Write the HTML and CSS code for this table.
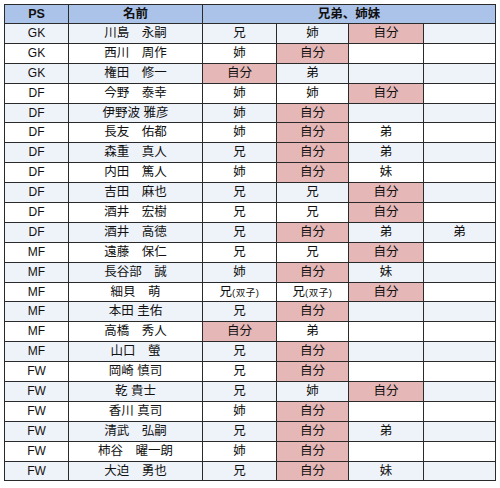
FILE: index.html
```html
<!DOCTYPE html>
<html lang="ja">
<head>
<meta charset="utf-8">
<title>兄弟、姉妹</title>
<link rel="stylesheet" href="styles.css">
</head>
<body>
<table class="sheet">
  <colgroup>
    <col class="c-ps"><col class="c-name"><col class="c-s1"><col class="c-s2"><col class="c-s3"><col class="c-s4">
  </colgroup>
  <thead>
    <tr><th>PS</th><th>名前</th><th colspan="4">兄弟、姉妹</th></tr>
  </thead>
  <tbody>
    <tr><td class="ps">GK</td><td>川島　永嗣</td><td>兄</td><td>姉</td><td class="me">自分</td><td></td></tr>
    <tr><td class="ps">GK</td><td>西川　周作</td><td>姉</td><td class="me">自分</td><td></td><td></td></tr>
    <tr><td class="ps">GK</td><td>権田　修一</td><td class="me">自分</td><td>弟</td><td></td><td></td></tr>
    <tr><td class="ps">DF</td><td>今野　泰幸</td><td>姉</td><td>姉</td><td class="me">自分</td><td></td></tr>
    <tr><td class="ps">DF</td><td>伊野波 雅彦</td><td>姉</td><td class="me">自分</td><td></td><td></td></tr>
    <tr><td class="ps">DF</td><td>長友　佑都</td><td>姉</td><td class="me">自分</td><td>弟</td><td></td></tr>
    <tr><td class="ps">DF</td><td>森重　真人</td><td>兄</td><td class="me">自分</td><td>弟</td><td></td></tr>
    <tr><td class="ps">DF</td><td>内田　篤人</td><td>姉</td><td class="me">自分</td><td>妹</td><td></td></tr>
    <tr><td class="ps">DF</td><td>吉田　麻也</td><td>兄</td><td>兄</td><td class="me">自分</td><td></td></tr>
    <tr><td class="ps">DF</td><td>酒井　宏樹</td><td>兄</td><td>兄</td><td class="me">自分</td><td></td></tr>
    <tr><td class="ps">DF</td><td>酒井　高徳</td><td>兄</td><td class="me">自分</td><td>弟</td><td>弟</td></tr>
    <tr><td class="ps">MF</td><td>遠藤　保仁</td><td>兄</td><td>兄</td><td class="me">自分</td><td></td></tr>
    <tr><td class="ps">MF</td><td>長谷部　誠</td><td>姉</td><td class="me">自分</td><td>妹</td><td></td></tr>
    <tr><td class="ps">MF</td><td>細貝　萌</td><td>兄<span class="note">(双子)</span></td><td>兄<span class="note">(双子)</span></td><td class="me">自分</td><td></td></tr>
    <tr><td class="ps">MF</td><td>本田 圭佑</td><td>兄</td><td class="me">自分</td><td></td><td></td></tr>
    <tr><td class="ps">MF</td><td>高橋　秀人</td><td class="me">自分</td><td>弟</td><td></td><td></td></tr>
    <tr><td class="ps">MF</td><td>山口　螢</td><td>兄</td><td class="me">自分</td><td></td><td></td></tr>
    <tr><td class="ps">FW</td><td>岡崎 慎司</td><td>兄</td><td class="me">自分</td><td></td><td></td></tr>
    <tr><td class="ps">FW</td><td>乾 貴士</td><td>兄</td><td>姉</td><td class="me">自分</td><td></td></tr>
    <tr><td class="ps">FW</td><td>香川 真司</td><td>姉</td><td class="me">自分</td><td></td><td></td></tr>
    <tr><td class="ps">FW</td><td>清武　弘嗣</td><td>兄</td><td class="me">自分</td><td>弟</td><td></td></tr>
    <tr><td class="ps">FW</td><td>柿谷　曜一朗</td><td>姉</td><td class="me">自分</td><td></td><td></td></tr>
    <tr><td class="ps">FW</td><td>大迫　勇也</td><td>兄</td><td class="me">自分</td><td>妹</td><td></td></tr>
  </tbody>
</table>
</body>
</html>
```

FILE: styles.css
```css
html, body {
  margin: 0;
  padding: 0;
  background: #ffffff;
}

body {
  padding: 4px 0 0 4px;
  font-family: "Liberation Sans", "Noto Sans CJK JP", sans-serif;
  color: #111111;
}

.sheet {
  border-collapse: collapse;
  table-layout: fixed;
  width: 491px;
  border: 1px solid #222;
  font-size: 12.5px;
}

.c-ps { width: 64px; }
.c-name { width: 134px; }
.c-s1 { width: 74px; }
.c-s2 { width: 72px; }
.c-s3 { width: 75px; }
.c-s4 { width: 72px; }

.sheet th,
.sheet td {
  border: 1px solid #2a2a2a;
  height: 18.9px;
  padding: 0;
  text-align: center;
  vertical-align: middle;
  line-height: 17px;
  white-space: nowrap;
  overflow: hidden;
}

.sheet th {
  background: #abc3e8;
  font-weight: bold;
  font-size: 12.5px;
  height: 18px;
}

.sheet tbody tr:nth-child(odd) td {
  background: #eef2f9;
}

.sheet tbody tr:nth-child(even) td {
  background: #ffffff;
}

.sheet tbody tr td.me {
  background: #e5b8b7;
}

.ps {
  font-size: 12px;
}

.note {
  font-size: 9.5px;
  letter-spacing: 0.5px;
}
```
